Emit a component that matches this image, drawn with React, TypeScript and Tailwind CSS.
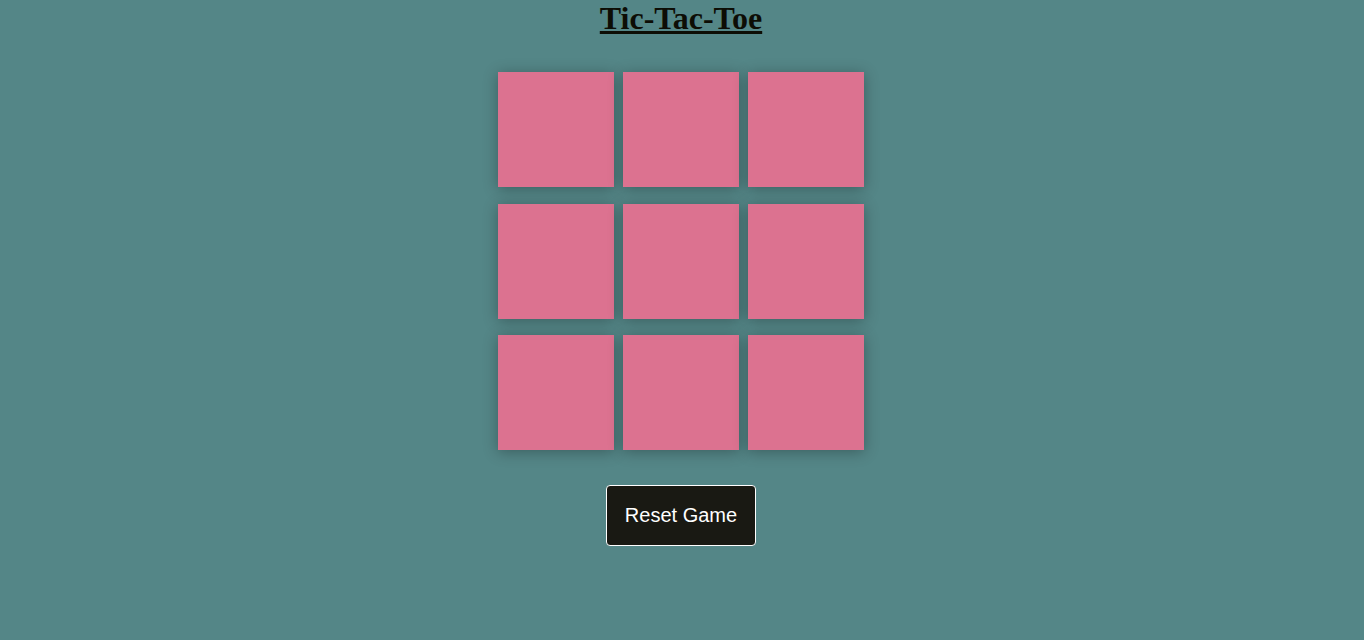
import React from "react";

export default function App() {
  const cells = Array.from({ length: 9 });
  return (
    <div className="min-h-[640px] w-full bg-[#548687] flex flex-col items-center pr-[2px]">
      <h1
        className="m-0 text-[32px] font-bold underline text-[#0d0d05] leading-[37px]"
        style={{ fontFamily: '"Liberation Serif", "Times New Roman", serif' }}
      >
        Tic-Tac-Toe
      </h1>
      <div className="mt-[35px] grid grid-cols-[repeat(3,116px)] auto-rows-[115.2px] gap-x-[9px] gap-y-[16.4px]">
        {cells.map((_, i) => (
          <button
            key={i}
            className="bg-[#dc7290] shadow-[0_2px_14px_rgba(0,0,0,0.3)] border-0"
          />
        ))}
      </div>
      <button
        className="mt-[34.6px] w-[150px] h-[61px] bg-[#191913] text-white text-[20px] border border-white rounded-[4px]"
        style={{ fontFamily: '"Liberation Sans", Arial, sans-serif' }}
      >
        Reset Game
      </button>
    </div>
  );
}
